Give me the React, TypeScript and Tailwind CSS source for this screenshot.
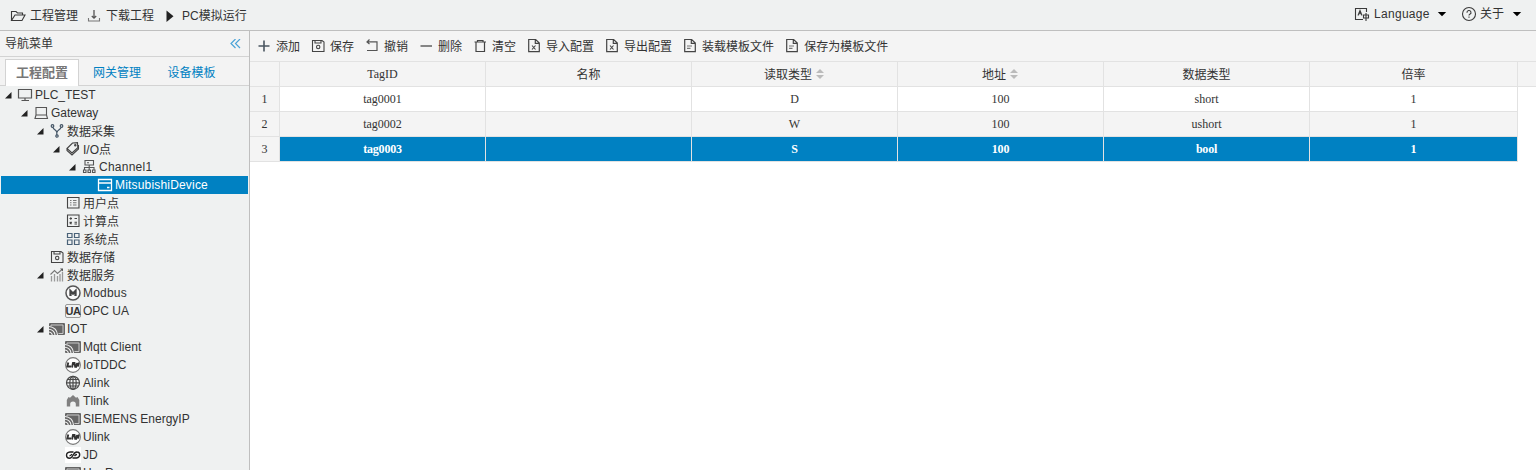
import { ReactNode, useState } from 'react';

const DARK = '#3a3a3a';

function Svg({ children, size = 16, color = DARK, sw = 1.1 }: { children: ReactNode; size?: number; color?: string; sw?: number }) {
  return (
    <svg width={size} height={size} viewBox="0 0 16 16" fill="none" stroke={color} strokeWidth={sw} className="shrink-0">
      {children}
    </svg>
  );
}

const icons: Record<string, ReactNode> = {
  folder: <Svg><path d="M1.500 12.500V3.500h4.500l1.500 1.500h5v2M1.500 12.500h10.500l3-5.500H5z" /></Svg>,
  download: <Svg><path d="M8 2v8M5.800 8L8 10.200 10.200 8" stroke="#555" strokeWidth="1.300" /><path d="M2.500 10v3h11v-3" stroke="#777" /></Svg>,
  play: <svg width="16" height="16" viewBox="0 0 16 16" className="shrink-0"><path d="M4.500 2.500v11.500L11.500 8.250z" fill="#222" /></svg>,
  lang: <Svg sw={1.1}><path d="M9 13.500H1.500V2.500h11V6M4 9.500l2-5 2 5M4.600 7.800h2.800M12 7v8M9.500 9h5v3h-5z" /></Svg>,
  about: <Svg><circle cx="8" cy="8" r="6.500" /><path d="M6 6.700a2 2 0 1 1 2.800 1.600q-.8.400-.8 1.300M8 10.500v1.200" /></Svg>,
  plus: <Svg sw={1.6} color="#4a5560"><path d="M2.500 8h11M8 2.500v11" /></Svg>,
  minus: <Svg sw={1.4} color="#555"><path d="M2.500 8h11.500" /></Svg>,
  save: <Svg color="#444"><path d="M2.500 2.500h9.500l2 1.500v9.500h-11.500zM5 2.500v2.500h6V2.500" /><circle cx="8.200" cy="9" r="1.700" /></Svg>,
  undo: <Svg color="#555" sw={1.2}><path d="M5.500 1.500L3 4l2.500 2M3 3.800h10v8.700H3" /></Svg>,
  trash: <Svg color="#444" sw={1.2}><path d="M2.500 4h11.500M5.500 4V2.500h5.500V4M4 4v9.500h8.500V4" /></Svg>,
  xls: <Svg color="#444" sw={1.2}><path d="M2.700 1.500h7L13.300 5v8.700H2.700zM9.300 1.500V5.300h4" /><path d="M6 7.500l3.500 4M9.500 7.500L6 11.500" strokeWidth="1.100" /></Svg>,
  doc: <Svg color="#444" sw={1.2}><path d="M2.700 1.500h7L13.300 5v8.700H2.700zM9.300 1.500V5.300h4" /><path d="M5 8h5M5 10.300h3.500" stroke="#777" /></Svg>,
  monitor: <Svg color="#555" sw={1.2}><path d="M1.500 2.500h13v8.500h-13zM8 11v2.500M4.500 13.500h7.500" /></Svg>,
  laptop: <Svg color="#555"><path d="M3 2.500h10.500v7.500H3zM3 10l-1 3.500h12.500L13.500 10" /></Svg>,
  fork: <Svg color="#445566" sw={1.2}><circle cx="3.500" cy="3" r="1.300" /><circle cx="12.500" cy="3" r="1.300" /><path d="M4 4.300C4.500 7 7.200 6.500 7.800 9.300V12M12 4.300C11.500 7 8.500 6.500 8 9.300" /><circle cx="8" cy="13" r="1.200" /></Svg>,
  tag: <Svg color="#444"><path d="M2 7.500L7.500 2l5-.3.300 5L7 12zM2 7.500v2L7 14l6.500-6V4" /><circle cx="10.300" cy="4.300" r=".7" /></Svg>,
  channel: <Svg color="#555"><path d="M4 1.500h8.500v4.500H4zM6 3.800h2M8.200 6v2.500M3.500 11V8.500h9.500V11M8.200 8.500V11M2.500 11h2.500v2.500H2.500zM7 11h2.500v2.500H7zM11.500 11H14v2.500h-2.500z" /></Svg>,
  device: <Svg color="#fff" sw={1.3}><path d="M1.500 2.500h13v11h-13zM1.500 6h13M10 10.500h2.500" /></Svg>,
  list: <Svg color="#444"><path d="M2.500 2.500h11.500v10.500H2.500z" /><path d="M5 5.500h1.500M8 5.500h3.500M5 7.800h1.500M8 7.800h3.500M5 10h1.500M8 10h3.500" stroke="#777" /></Svg>,
  calc: <Svg color="#444"><path d="M2.500 2h11.500v11.500H2.500z" /><path d="M4.500 5.500h2.500M5.800 4.300v2.500M9.500 5.500H12M4.700 9l2 2M6.700 9l-2 2M9.500 9.200H12M9.500 11H12" /></Svg>,
  grid: <Svg color="#4a6278" sw={1.2}><path d="M2.500 2.500H7V6.500H2.500zM9.500 2.500H14V6.500H9.500zM2.500 9H7v4.500H2.500zM9.500 9H14v4.500H9.500z" /></Svg>,
  chart: <Svg color="#999"><path d="M2.500 9v5.500M5.500 7v7.500M8.500 9v5.500M11 7v7.500M13.500 5v9.500" strokeWidth="1.300" /><path d="M1.500 7.500L5.500 3.500l3 3L13 2.500" stroke="#777" /><path d="M11 1.500h3v3z" fill="#555" stroke="none" /></Svg>,
  modbus: <Svg color="#555" sw={1.5}><circle cx="8" cy="8" r="7" fill="#fafafa" /><path d="M5.500 11V6L8 8.500 10.500 6V11" strokeWidth="2.300" stroke="#444" /></Svg>,
  ua: <span className="flex h-[14px] w-4 shrink-0 items-center justify-center rounded-[2px] border border-[#999] text-[11px] leading-none font-bold tracking-[-0.5px] text-[#333]">UA</span>,
  cast: (
    <svg width="16" height="16" viewBox="0 0 16 16" className="shrink-0" fill="none">
      <rect x="0" y="2" width="16" height="12" rx="1" fill="#666" />
      <path d="M2 5.500V4h12v8.500H9.500" stroke="#c8c8c8" />
      <path d="M0 5.500Q8 6.500 8.500 14M0 8.300Q5.500 9 6 14M0 11Q3 11.500 3.300 14" stroke="#f0f1f1" strokeWidth="1.100" />
    </svg>
  ),
  ln: <Svg color="#777" sw={1.1}><circle cx="8" cy="8" r="7.400" fill="#fff" /><path d="M3.300 5.500L2.300 9.500h3.700M7 10.500L8 6h1.500l.7 3.800h1L12.200 6M13.800 5.500l-.8 4" stroke="#333" strokeWidth="1.900" /></Svg>,
  globe: <Svg color="#4a4a4a" sw={1.2}><circle cx="8" cy="7.800" r="6.500" /><ellipse cx="8" cy="7.800" rx="3.200" ry="6.500" /><path d="M8 1.300v13M1.500 7.800h13M2.600 4.500h10.800M2.600 11h10.800" /></Svg>,
  tlink: <svg width="16" height="16" viewBox="0 0 16 16" className="shrink-0"><path d="M1.800 13.500V7L3.500 4l1.500.8L8 2l3 2.800 1.500-.8L14.300 7v6.500h-3.500v-2.500a2.800 2.500 0 0 0-5.600 0v2.500z" fill="#808080" /></svg>,
  jd: <svg width="16" height="16" viewBox="0 0 16 16" className="shrink-0" fill="none"><rect width="16" height="16" fill="#fff" /><path d="M8.500 5H5Q1.500 5.300 1.500 8.300T4.500 11.300Q6.500 11.300 8.200 8t4-3Q14.700 5.200 14.700 7.800T11.500 11H7.500M4.500 8.800Q6 8.800 7 7M9.500 9.200Q10.500 7.500 12 7.500" stroke="#222" strokeWidth="1.400" /></svg>,
};

type Node = { d: number; icon: string; label: string; cls?: string; open?: boolean };
const tree: Node[] = [
  { d: 0, icon: 'monitor', label: 'PLC_TEST', open: true },
  { d: 1, icon: 'laptop', label: 'Gateway', open: true },
  { d: 2, icon: 'fork', label: '数据采集', open: true, cls: 'pt-[2px]' },
  { d: 3, icon: 'tag', label: 'I/O点', open: true, cls: 'pt-px' },
  { d: 4, icon: 'channel', label: 'Channel1', open: true, cls: 'tracking-[0.25px]' },
  { d: 5, icon: 'device', label: 'MitsubishiDevice', cls: 'tracking-[0.18px]' },
  { d: 3, icon: 'list', label: '用户点', cls: 'pt-[2px]' },
  { d: 3, icon: 'calc', label: '计算点', cls: 'pt-[2px]' },
  { d: 3, icon: 'grid', label: '系统点', cls: 'pt-[2px]' },
  { d: 2, icon: 'save', label: '数据存储', cls: 'pt-[2px]' },
  { d: 2, icon: 'chart', label: '数据服务', open: true, cls: 'pt-[2px]' },
  { d: 3, icon: 'modbus', label: 'Modbus', cls: 'tracking-[0.2px]' },
  { d: 3, icon: 'ua', label: 'OPC UA' },
  { d: 2, icon: 'cast', label: 'IOT', open: true },
  { d: 3, icon: 'cast', label: 'Mqtt Client', cls: 'tracking-[0.1px]' },
  { d: 3, icon: 'ln', label: 'IoTDDC' },
  { d: 3, icon: 'globe', label: 'Alink', cls: 'tracking-[0.1px]' },
  { d: 3, icon: 'tlink', label: 'Tlink', cls: 'tracking-[0.1px]' },
  { d: 3, icon: 'cast', label: 'SIEMENS EnergyIP' },
  { d: 3, icon: 'ln', label: 'Ulink' },
  { d: 3, icon: 'jd', label: 'JD' },
  { d: 3, icon: 'cast', label: 'HuaRun' },
];
const indents = ['pl-0', 'pl-4', 'pl-8', 'pl-12', 'pl-16', 'pl-20'];

const tools = [
  ['plus', '添加'], ['save', '保存'], ['undo', '撤销'], ['minus', '删除'], ['trash', '清空'],
  ['xls', '导入配置'], ['xls', '导出配置'], ['doc', '装载模板文件'], ['doc', '保存为模板文件'],
];

const headers = ['TagID', '名称', '读取类型', '地址', '数据类型', '倍率'];
const rows = [
  ['tag0001', '', 'D', '100', 'short', '1'],
  ['tag0002', '', 'W', '100', 'ushort', '1'],
  ['tag0003', '', 'S', '100', 'bool', '1'],
];
const columns = 'grid grid-cols-[30px_repeat(5,206px)_208px_1fr]';

function Caret() {
  return <svg width="10" height="6" viewBox="0 0 10 6" className="shrink-0"><path d="M.8 1h8.400L5 5.200z" fill="#000" /></svg>;
}

function Sorter() {
  return <svg width="8" height="10" viewBox="0 0 8 10" className="mr-px ml-1"><path d="M0 4h8L4 0zM0 6h8l-4 4z" fill="#bbb" /></svg>;
}

export default function App() {
  const [selectedNode, setSelectedNode] = useState(5);
  const [selectedRow, setSelectedRow] = useState(2);
  return (
    <div className="flex h-[470px] w-full flex-col overflow-hidden bg-white font-['Liberation_Sans','Noto_Sans_CJK_SC',sans-serif] text-[12px] leading-[18px] whitespace-nowrap text-[#333]">
      <header className="flex h-[31px] shrink-0 items-center justify-between border-b border-[#bfbfbf] bg-[#eff1f1] pl-[10px]">
        <nav className="flex gap-2 pt-[2px]">
          {[['folder', '工程管理'], ['download', '下载工程'], ['play', 'PC模拟运行']].map(([i, t]) => (
            <button key={t} className="flex items-center gap-1">{icons[i]}{t}</button>
          ))}
        </nav>
        <div className="flex items-center pr-[14px] pb-[3px]">
          <button className="flex items-center gap-1">{icons.lang}<span className="w-[59px] text-left tracking-[0.3px]">Language</span><Caret /></button>
          <button className="ml-[14px] flex items-center"><span className="mr-[3px]">{icons.about}</span><span className="pt-px">关于</span><span className="ml-2"><Caret /></span></button>
        </div>
      </header>

      <div className="flex min-h-0 flex-1">
        <aside className="flex w-[250px] shrink-0 flex-col overflow-hidden border-r border-[#bfbfbf] bg-[#eff1f1]">
          <div className="flex h-[26px] shrink-0 items-center justify-between border-b border-[#d3d3d3] bg-[#f3f3f3] pr-2 pl-[5px]">
            <span>导航菜单</span>
            <svg width="11" height="10" viewBox="0 0 11 10" fill="none" stroke="#4ba3d8" strokeWidth="1.200"><path d="M5.500 0L1 4.500l4.500 4.500M10 0L5.500 4.500 10 9" /></svg>
          </div>
          <div className="flex h-[29px] shrink-0 items-end border-b border-[#d3d3d3] bg-[#f3f3f3] pl-[5px]">
            <div className="-mb-px flex h-[27px] w-[74px] items-center justify-center border border-b-0 border-[#d3d3d3] bg-white font-bold text-[#777]">
              <span className="text-[13px]">工程配置</span>
            </div>
            <div className="flex h-[26px] w-[76px] items-center justify-center pt-[2px] text-[#0081c2]">网关管理</div>
            <div className="flex h-[26px] w-[73px] items-center justify-center pt-[2px] text-[#0081c2]">设备模板</div>
          </div>
          <ul className="px-px">
            {tree.map((n, i) => (
              <li
                key={i}
                onClick={() => setSelectedNode(i)}
                className={`flex h-[18px] items-center ${indents[n.d]} ${selectedNode === i ? 'bg-[#0081c2] text-white' : ''}`}
              >
                <span className="flex w-4 justify-center pt-px pr-px">
                  {n.open && <svg width="7" height="7" viewBox="0 0 7 7"><path d="M6.500 0v6.500H0z" fill="#222" /></svg>}
                </span>
                {icons[n.icon]}
                <span className={`ml-[2px] ${n.cls ?? ''}`}>{n.label}</span>
              </li>
            ))}
          </ul>
        </aside>

        <main className="flex min-w-0 flex-1 flex-col">
          <div className="flex h-[31px] shrink-0 items-center gap-[10px] border-b border-[#e2e2e2] bg-[#f4f4f4] pl-[6px]">
            {tools.map(([i, t]) => (
              <button key={t} className="flex items-center gap-1">{icons[i]}<span className="pt-[2px]">{t}</span></button>
            ))}
          </div>
          <div className="font-['Liberation_Serif','Noto_Sans_CJK_SC',serif]">
            <div className={`${columns} h-[25px] border-b border-[#e2e2e2] bg-[#f4f4f4]`}>
              <div className="border-r border-[#e2e2e2]" />
              {headers.map((h, i) => (
                <div key={h} className="flex items-center justify-center border-r border-[#e2e2e2]">
                  <span className={i === 0 ? '' : 'pt-[2px]'}>{h}</span>
                  {(i === 2 || i === 3) && <Sorter />}
                </div>
              ))}
            </div>
            {rows.map((r, i) => (
              <div key={i} className={`${columns} h-[25px]`} onClick={() => setSelectedRow(i)}>
                <div className="flex items-center justify-center border-r border-b border-[#e2e2e2] bg-[#f4f4f4]">{i + 1}</div>
                {r.map((c, j) => (
                  <div
                    key={j}
                    className={`flex items-center justify-center border-r border-b border-[#e2e2e2] ${selectedRow === i ? 'bg-[#0081c2] font-bold tracking-[-0.2px] text-white' : i % 2 ? 'bg-[#f4f4f4]' : 'bg-white'}`}
                  >
                    {c}
                  </div>
                ))}
              </div>
            ))}
          </div>
        </main>
      </div>
    </div>
  );
}
